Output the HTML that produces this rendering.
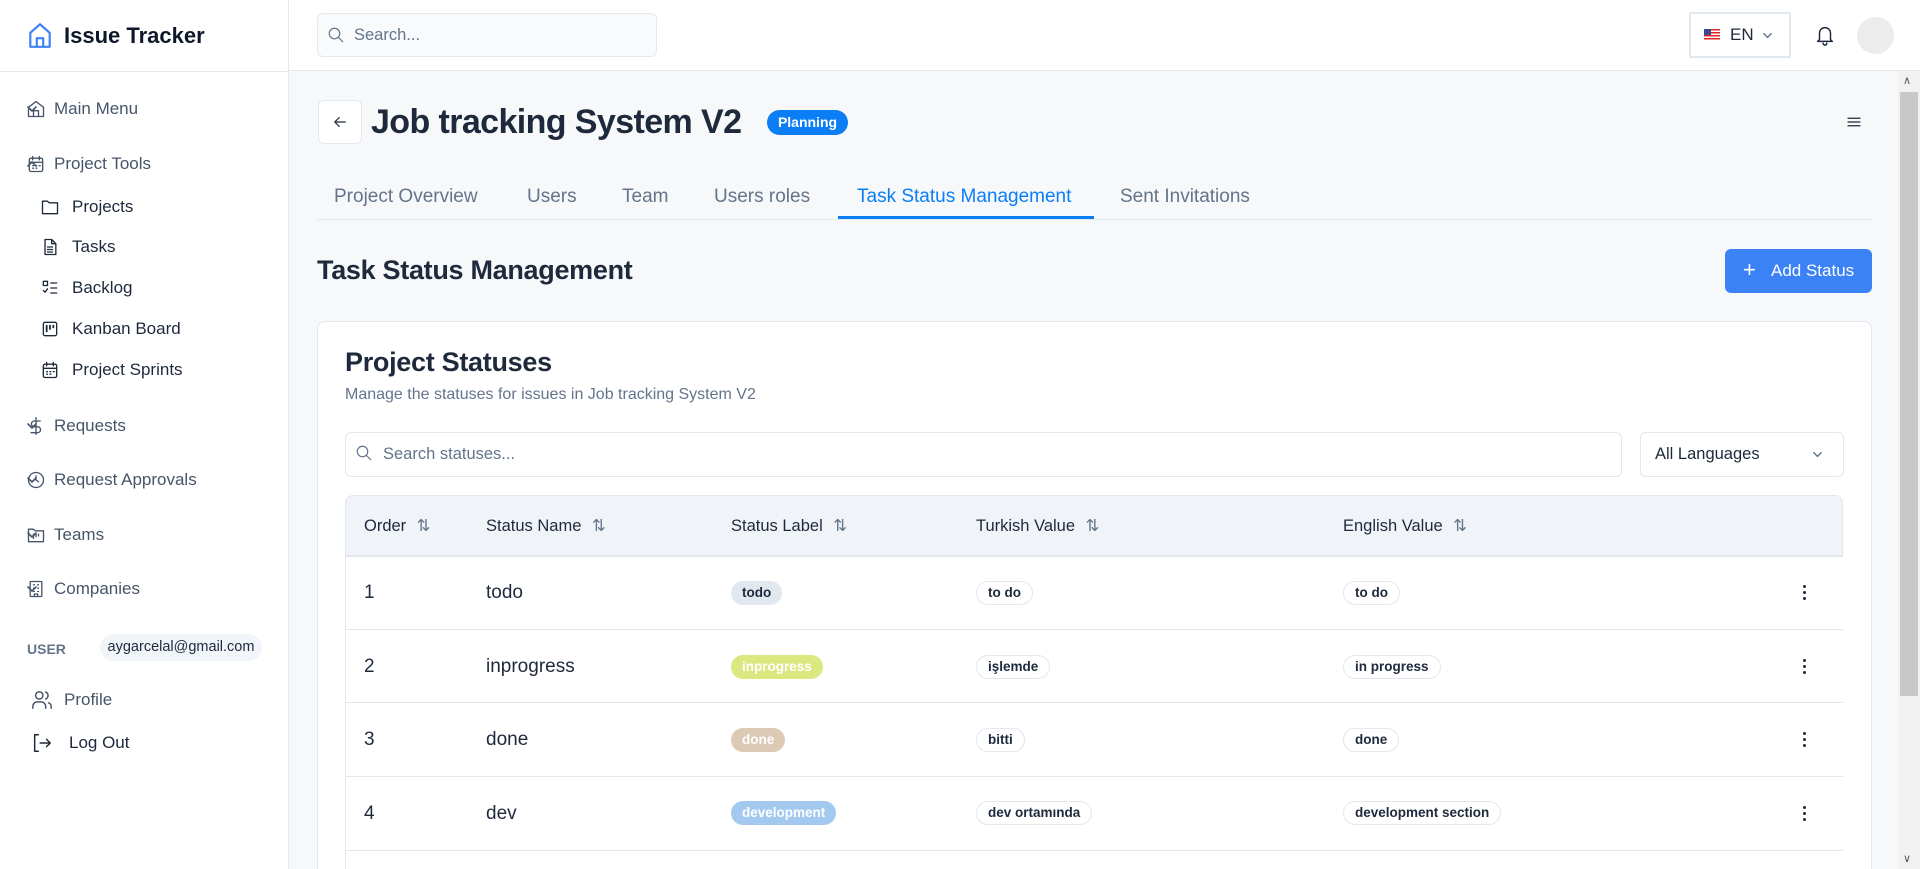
<!DOCTYPE html>
<html><head><meta charset="utf-8"><style>
*{box-sizing:border-box;margin:0;padding:0}
html,body{overflow:hidden}
body{width:1920px;height:869px;font-family:"Liberation Sans","DejaVu Sans",sans-serif;background:#f7f8fa;color:#1e293b;position:relative}
.abs{position:absolute}
.sb{left:0;top:0;width:289px;height:869px;background:#fff;border-right:1px solid #e5e7eb}
.hdr{left:289px;top:0;width:1631px;height:71px;background:#fff;border-bottom:1px solid #e2e8f0}
.nav{position:absolute;display:flex;align-items:center;font-size:17px;color:#475569}
.nav svg{position:absolute;left:0}
.chev{position:absolute;left:246px}
.sub{color:#1e293b}
svg{fill:none;stroke:currentColor;stroke-width:1.6;stroke-linecap:round;stroke-linejoin:round}
.tab{position:absolute;top:186px;font-size:19px;color:#64748b}
.th{position:absolute;top:516px;font-size:16.5px;color:#1e293b;font-weight:500}
.td{position:absolute;font-size:19px;color:#1e293b}
.pill{position:absolute;height:24px;line-height:24px;padding:0 11px;border-radius:12px;font-size:13.5px;font-weight:bold}
.ob{border:1px solid #e2e8f0;background:#fff;color:#1e293b;line-height:22px}
.row{position:absolute;left:346px;width:1497px;height:1px;background:#e2e8f0}
.dots{position:absolute;left:1803px;width:4px}
.dots i{display:block;width:3px;height:3px;background:#1e293b;border-radius:2px;margin-bottom:3px}
</style></head><body>
<div class="abs sb">
  <svg class="abs" style="left:27px;top:21px" width="26" height="28" viewBox="0 0 24 26" stroke="#3b82f6" style="stroke:#3b82f6"><path style="stroke:#3b82f6;stroke-width:2" d="M3 11 L12 3 L21 11 V24 H3 Z"/><path style="stroke:#3b82f6;stroke-width:2" d="M9 24 V16 H15 V24"/></svg>
  <div class="abs" style="left:64px;top:23px;font-size:22px;font-weight:bold;color:#0f172a">Issue Tracker</div>
  <div class="abs" style="left:0;top:71px;width:289px;height:1px;background:#e2e8f0"></div>

  <div class="nav" style="left:26px;top:99px;width:240px;height:20px"><svg width="20" height="20" viewBox="0 0 24 24"><path d="M3 10 L12 3 L21 10 V21 H3 Z"/><path d="M9 21 V14 H15 V21"/></svg><span style="margin-left:28px">Main Menu</span><svg class="chev" width="12" height="12" viewBox="0 0 12 12"><path d="M2 4 L6 8 L10 4"/></svg></div>
  <div class="nav" style="left:26px;top:154px;width:240px;height:20px"><svg width="20" height="20" viewBox="0 0 24 24"><rect x="4" y="5" width="16" height="16" rx="2"/><path d="M4 10 H20 M8 3 V7 M16 3 V7 M8 14h1 M12 14h1 M16 14h1 M8 17h1 M12 17h1"/></svg><span style="margin-left:28px">Project Tools</span><svg class="chev" width="12" height="12" viewBox="0 0 12 12"><path d="M2 8 L6 4 L10 8"/></svg></div>
  <div class="nav sub" style="left:40px;top:197px;height:20px"><svg width="20" height="20" viewBox="0 0 24 24"><path d="M3 5 H9 L11 7 H21 V20 H3 Z"/></svg><span style="margin-left:32px">Projects</span></div>
  <div class="nav sub" style="left:40px;top:237px;height:20px"><svg width="20" height="20" viewBox="0 0 24 24"><path d="M6 3 H14 L19 8 V21 H6 Z M14 3 V8 H19 M9 12h6 M9 15h6 M9 18h6"/></svg><span style="margin-left:32px">Tasks</span></div>
  <div class="nav sub" style="left:40px;top:278px;height:20px"><svg width="20" height="20" viewBox="0 0 24 24"><rect x="4" y="4" width="5" height="5"/><path d="M4 15 L6 17 L9 13 M13 6 H20 M13 12 H20 M13 18 H20"/></svg><span style="margin-left:32px">Backlog</span></div>
  <div class="nav sub" style="left:40px;top:319px;height:20px"><svg width="20" height="20" viewBox="0 0 24 24"><rect x="4" y="4" width="16" height="16" rx="2"/><path d="M8 8 V15 M12 8 V12 M16 8 V10" stroke-width="2.2"/></svg><span style="margin-left:32px">Kanban Board</span></div>
  <div class="nav sub" style="left:40px;top:360px;height:20px"><svg width="20" height="20" viewBox="0 0 24 24"><rect x="4" y="5" width="16" height="16" rx="2"/><path d="M4 10 H20 M8 3 V7 M16 3 V7 M8 14h1 M12 14h1 M16 14h1 M8 17h1 M12 17h1"/></svg><span style="margin-left:32px">Project Sprints</span></div>
  <div class="nav" style="left:26px;top:416px;width:240px;height:20px"><svg width="20" height="20" viewBox="0 0 24 24"><path d="M12 2 V22 M17 6 H10 a3.5 3.5 0 0 0 0 7 H14 a3.5 3.5 0 0 1 0 7 H6"/></svg><span style="margin-left:28px">Requests</span><svg class="chev" width="12" height="12" viewBox="0 0 12 12"><path d="M2 4 L6 8 L10 4"/></svg></div>
  <div class="nav" style="left:26px;top:470px;width:240px;height:20px"><svg width="20" height="20" viewBox="0 0 24 24"><circle cx="12" cy="12" r="9"/><path d="M12 7 V12 L15 14"/></svg><span style="margin-left:28px">Request Approvals</span><svg class="chev" width="12" height="12" viewBox="0 0 12 12"><path d="M2 4 L6 8 L10 4"/></svg></div>
  <div class="nav" style="left:26px;top:525px;width:240px;height:20px"><svg width="20" height="20" viewBox="0 0 24 24"><path d="M3 5 H9 L11 7 H21 V20 H3 Z M9 11 V16 M12 11 V14 M15 11 V13"/></svg><span style="margin-left:28px">Teams</span><svg class="chev" width="12" height="12" viewBox="0 0 12 12"><path d="M2 4 L6 8 L10 4"/></svg></div>
  <div class="nav" style="left:26px;top:579px;width:240px;height:20px"><svg width="20" height="20" viewBox="0 0 24 24"><rect x="5" y="3" width="14" height="18" rx="1"/><path d="M9 7h1 M14 7h1 M9 11h1 M14 11h1 M9 15h1 M14 15h1 M10 21 V18 H14 V21"/></svg><span style="margin-left:28px">Companies</span><svg class="chev" width="12" height="12" viewBox="0 0 12 12"><path d="M2 4 L6 8 L10 4"/></svg></div>
  <div class="abs" style="left:27px;top:641px;font-size:14px;font-weight:bold;color:#64748b">USER</div>
  <div class="abs" style="left:100px;top:634px;width:162px;height:27px;border-radius:14px;background:#f1f5f9;font-size:14.5px;line-height:27px;text-align:center;color:#1e293b">aygarcelal@gmail.com</div>
  <div class="nav" style="left:31px;top:689px;height:22px;color:#475569"><svg width="22" height="22" viewBox="0 0 24 24"><circle cx="9" cy="7" r="4"/><path d="M2 21 V19 a5 5 0 0 1 5-5 h4 a5 5 0 0 1 5 5 v2 M16 3.3 a4 4 0 0 1 0 7.5 M22 21 v-2 a4 4 0 0 0-3-3.9"/></svg><span style="margin-left:33px">Profile</span></div>
  <div class="nav" style="left:31px;top:732px;height:22px;color:#1e293b"><svg width="22" height="22" viewBox="0 0 24 24"><path d="M8 3 H4 V21 H8 M10 12 H21 M17 8 L21 12 L17 16"/></svg><span style="margin-left:38px">Log Out</span></div>
</div>

<div class="abs hdr">
  <div class="abs" style="left:28px;top:13px;width:340px;height:44px;border:1px solid #e2e8f0;border-radius:6px;background:#f8fafc"></div>
  <svg class="abs" style="left:38px;top:26px;color:#64748b" width="18" height="18" viewBox="0 0 24 24"><circle cx="10" cy="10" r="7"/><path d="M15 15 L21 21"/></svg>
  <div class="abs" style="left:65px;top:26px;font-size:16.5px;color:#64748b">Search...</div>
  <div class="abs" style="left:1400px;top:12px;width:102px;height:46px;border:2px solid #e2e8f0;background:#fff"></div>
  <svg class="abs" style="left:1415px;top:29px;stroke:none" width="16" height="12" viewBox="0 0 16 12"><rect width="16" height="12" style="fill:#fff;stroke:none"/><g style="fill:#dc2626;stroke:none"><rect y="0" width="16" height="1.5"/><rect y="3" width="16" height="1.5"/><rect y="6" width="16" height="1.5"/><rect y="9" width="16" height="1.5"/></g><rect width="7" height="6" style="fill:#3b4a8a;stroke:none"/></svg>
  <div class="abs" style="left:1441px;top:25px;font-size:17px;color:#1e293b">EN</div>
  <svg class="abs" style="left:1473px;top:30px;color:#64748b" width="11" height="11" viewBox="0 0 12 12"><path d="M2 4 L6 8 L10 4"/></svg>
  <svg class="abs" style="left:1525px;top:23px;color:#1e293b" width="22" height="24" viewBox="0 0 24 24"><path d="M6 17 V10 a6 6 0 0 1 12 0 V17 L20 19 H4 Z M10 21 a2 2 0 0 0 4 0"/></svg>
  <div class="abs" style="left:1568px;top:17px;width:37px;height:37px;border-radius:50%;background:#ececec"></div>
</div>

<div class="abs" style="left:1898px;top:71px;width:22px;height:798px;background:#f1f1f1"></div>
<div class="abs" style="left:1900px;top:92px;width:18px;height:604px;background:#c8c8c8"></div>
<div class="abs" style="left:1903px;top:74px;font-size:11px;color:#555">&#x2227;</div>
<div class="abs" style="left:1903px;top:852px;font-size:11px;color:#555">&#x2228;</div>

<div class="abs" style="left:318px;top:100px;width:44px;height:44px;border:1px solid #e2e8f0;border-radius:6px;background:#fff"></div>
<svg class="abs" style="left:331px;top:113px;color:#1e293b" width="18" height="18" viewBox="0 0 24 24"><path d="M19 12 H5 M11 6 L5 12 L11 18"/></svg>
<div class="abs" style="left:371px;top:103px;font-size:34px;font-weight:bold;color:#1e293b;letter-spacing:-0.6px;white-space:nowrap">Job tracking System V2</div>
<div class="abs" style="left:767px;top:110px;width:81px;height:25px;border-radius:13px;background:#0b7ef5;color:#fff;font-size:14px;font-weight:bold;text-align:center;line-height:25px">Planning</div>
<svg class="abs" style="left:1845px;top:113px;color:#1e293b" width="18" height="18" viewBox="0 0 24 24"><path d="M4 7 H20 M4 12 H20 M4 17 H20"/></svg>

<div class="tab" style="left:334px">Project Overview</div>
<div class="tab" style="left:527px">Users</div>
<div class="tab" style="left:622px">Team</div>
<div class="tab" style="left:714px">Users roles</div>
<div class="tab" style="left:857px;color:#0b7ef5">Task Status Management</div>
<div class="tab" style="left:1120px">Sent Invitations</div>
<div class="abs" style="left:317px;top:219px;width:1555px;height:1px;background:#e2e8f0"></div>
<div class="abs" style="left:838px;top:216px;width:256px;height:3px;background:#0b7ef5"></div>

<div class="abs" style="left:317px;top:255px;font-size:27px;font-weight:bold;color:#1e293b;letter-spacing:-0.3px">Task Status Management</div>
<div class="abs" style="left:1725px;top:249px;width:147px;height:44px;border-radius:6px;background:#3b82f6;color:#fff;font-size:17px;line-height:44px"><span style="position:absolute;left:18px;top:-1px;font-size:22px">+</span><span style="position:absolute;left:46px">Add Status</span></div>

<div class="abs" style="left:317px;top:321px;width:1555px;height:560px;background:#fff;border:1px solid #e2e8f0;border-radius:8px"></div>
<div class="abs" style="left:345px;top:347px;font-size:27px;font-weight:bold;color:#1e293b;letter-spacing:-0.3px">Project Statuses</div>
<div class="abs" style="left:345px;top:386px;font-size:16px;color:#64748b">Manage the statuses for issues in Job tracking System V2</div>

<div class="abs" style="left:345px;top:432px;width:1277px;height:45px;border:1px solid #e2e8f0;border-radius:6px;background:#fff"></div>
<svg class="abs" style="left:355px;top:444px;color:#64748b" width="18" height="18" viewBox="0 0 24 24"><circle cx="10" cy="10" r="7"/><path d="M15 15 L21 21"/></svg>
<div class="abs" style="left:383px;top:445px;font-size:16.5px;color:#64748b">Search statuses...</div>
<div class="abs" style="left:1640px;top:432px;width:204px;height:45px;border:1px solid #e2e8f0;border-radius:6px;background:#fff"></div>
<div class="abs" style="left:1655px;top:445px;font-size:16.5px;color:#1e293b">All Languages</div>
<svg class="abs" style="left:1812px;top:449px;color:#64748b" width="11" height="11" viewBox="0 0 12 12"><path d="M2 4 L6 8 L10 4"/></svg>

<div class="abs" style="left:345px;top:495px;width:1498px;height:61px;background:#f0f3f8;border:1px solid #e2e8f0;border-radius:8px 8px 0 0"></div>
<div class="th" style="left:364px">Order <span style="color:#64748b;margin-left:6px">⇅</span></div>
<div class="th" style="left:486px">Status Name <span style="color:#64748b;margin-left:6px">⇅</span></div>
<div class="th" style="left:731px">Status Label <span style="color:#64748b;margin-left:6px">⇅</span></div>
<div class="th" style="left:976px">Turkish Value <span style="color:#64748b;margin-left:6px">⇅</span></div>
<div class="th" style="left:1343px">English Value <span style="color:#64748b;margin-left:6px">⇅</span></div>
<div class="abs" style="left:345px;top:556px;width:1px;height:320px;background:#e2e8f0"></div>
<div class="row" style="top:556px"></div><div class="row" style="top:629px"></div><div class="row" style="top:702px"></div><div class="row" style="top:776px"></div><div class="row" style="top:850px"></div>

<div class="td" style="left:364px;top:582px">1</div><div class="td" style="left:486px;top:582px">todo</div>
<div class="pill" style="left:731px;top:581px;background:#e2e8f0;color:#1e293b">todo</div>
<div class="pill ob" style="left:976px;top:581px">to do</div><div class="pill ob" style="left:1343px;top:581px">to do</div>
<div class="dots" style="top:585px"><i></i><i></i><i></i></div>

<div class="td" style="left:364px;top:656px">2</div><div class="td" style="left:486px;top:656px">inprogress</div>
<div class="pill" style="left:731px;top:655px;background:#dbe77f;color:#fff">inprogress</div>
<div class="pill ob" style="left:976px;top:655px">işlemde</div><div class="pill ob" style="left:1343px;top:655px">in progress</div>
<div class="dots" style="top:659px"><i></i><i></i><i></i></div>

<div class="td" style="left:364px;top:729px">3</div><div class="td" style="left:486px;top:729px">done</div>
<div class="pill" style="left:731px;top:728px;background:#dccab5;color:#fff">done</div>
<div class="pill ob" style="left:976px;top:728px">bitti</div><div class="pill ob" style="left:1343px;top:728px">done</div>
<div class="dots" style="top:732px"><i></i><i></i><i></i></div>

<div class="td" style="left:364px;top:803px">4</div><div class="td" style="left:486px;top:803px">dev</div>
<div class="pill" style="left:731px;top:801px;background:#a3c9ef;color:#fff">development</div>
<div class="pill ob" style="left:976px;top:801px">dev ortamında</div><div class="pill ob" style="left:1343px;top:801px">development section</div>
<div class="dots" style="top:806px"><i></i><i></i><i></i></div>
</body></html>
